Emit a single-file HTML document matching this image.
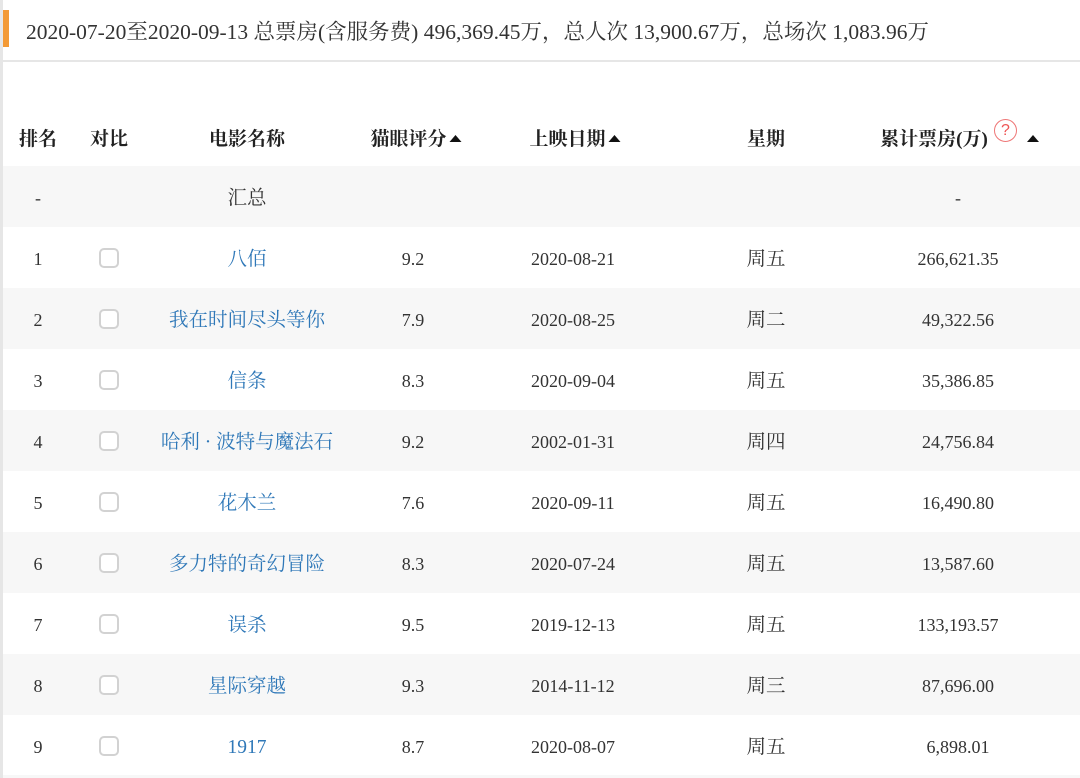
<!DOCTYPE html>
<html style="overflow:hidden;height:778px"><head><meta charset="utf-8"><style>
html,body{overflow:hidden}
body{margin:0;width:1080px;height:778px;background:#fff;position:relative;font-family:"Liberation Serif","Noto Serif CJK SC",serif;color:#333}
.lb{position:absolute;left:0;top:0;width:3px;height:778px;background:#e6e6e6}
.ob{position:absolute;left:3px;top:10px;width:6px;height:37px;background:#f39a36}
.title{position:absolute;left:26px;top:15px;font-size:21.5px;color:#333;white-space:nowrap}
.hl{position:absolute;left:3px;right:0;top:60px;height:2px;background:#e6e6e6}
.row{position:absolute;left:3px;right:0;height:61px}
.g{background:#f7f7f7}
.c{position:absolute;top:2px;height:61px;line-height:61px;text-align:center;font-size:18px;white-space:nowrap;transform:translateX(-50%)}
.h{font-weight:bold;font-size:19px;color:#222}
.a{color:#2f78b8;font-size:19.5px}
.w{font-size:19.5px}
.cb{position:absolute;top:21px;left:96px;width:16px;height:16px;border:2px solid #d2d2d2;border-radius:5px;background:#fff}
.tri{display:inline-block;width:0;height:0;border-left:6px solid transparent;border-right:6px solid transparent;border-bottom:7px solid #111;vertical-align:3px;margin-left:3px}
.q{position:absolute;left:994px;top:119px;width:21px;height:21px;border:1.5px solid #e77;border-radius:50%;color:#e55;font-size:16px;line-height:21px;text-align:center;font-family:"Liberation Sans",sans-serif}
</style></head><body>
<div class="lb"></div><div class="ob"></div>
<div class="title">2020-07-20至2020-09-13 总票房(含服务费) 496,369.45万，总人次 13,900.67万，总场次 1,083.96万</div>
<div class="hl"></div>
<div class="row" style="top:107px">
<div class="c h" style="left:35px">排名</div><div class="c h" style="left:106px">对比</div><div class="c h" style="left:244px">电影名称</div>
<div class="c h" style="left:413px">猫眼评分<span class="tri"></span></div><div class="c h" style="left:572px">上映日期<span class="tri"></span></div>
<div class="c h" style="left:763px">星期</div><div class="c h" style="left:931px">累计票房(万)</div>
<div style="position:absolute;left:1021px;top:28px" class="tri"></div>
</div>
<div class="q">?</div>
<div class="row g" style="top:166px"><div class="c" style="left:35px">-</div><div class="c w" style="left:244px">汇总</div><div class="c" style="left:955px">-</div></div>
<div class="row" style="top:227px"><div class="c" style="left:35px">1</div><div class="cb"></div><div class="c a" style="left:244px">八佰</div><div class="c" style="left:410px">9.2</div><div class="c" style="left:570px">2020-08-21</div><div class="c w" style="left:763px">周五</div><div class="c" style="left:955px">266,621.35</div></div>
<div class="row g" style="top:288px"><div class="c" style="left:35px">2</div><div class="cb"></div><div class="c a" style="left:244px">我在时间尽头等你</div><div class="c" style="left:410px">7.9</div><div class="c" style="left:570px">2020-08-25</div><div class="c w" style="left:763px">周二</div><div class="c" style="left:955px">49,322.56</div></div>
<div class="row" style="top:349px"><div class="c" style="left:35px">3</div><div class="cb"></div><div class="c a" style="left:244px">信条</div><div class="c" style="left:410px">8.3</div><div class="c" style="left:570px">2020-09-04</div><div class="c w" style="left:763px">周五</div><div class="c" style="left:955px">35,386.85</div></div>
<div class="row g" style="top:410px"><div class="c" style="left:35px">4</div><div class="cb"></div><div class="c a" style="left:244px">哈利 · 波特与魔法石</div><div class="c" style="left:410px">9.2</div><div class="c" style="left:570px">2002-01-31</div><div class="c w" style="left:763px">周四</div><div class="c" style="left:955px">24,756.84</div></div>
<div class="row" style="top:471px"><div class="c" style="left:35px">5</div><div class="cb"></div><div class="c a" style="left:244px">花木兰</div><div class="c" style="left:410px">7.6</div><div class="c" style="left:570px">2020-09-11</div><div class="c w" style="left:763px">周五</div><div class="c" style="left:955px">16,490.80</div></div>
<div class="row g" style="top:532px"><div class="c" style="left:35px">6</div><div class="cb"></div><div class="c a" style="left:244px">多力特的奇幻冒险</div><div class="c" style="left:410px">8.3</div><div class="c" style="left:570px">2020-07-24</div><div class="c w" style="left:763px">周五</div><div class="c" style="left:955px">13,587.60</div></div>
<div class="row" style="top:593px"><div class="c" style="left:35px">7</div><div class="cb"></div><div class="c a" style="left:244px">误杀</div><div class="c" style="left:410px">9.5</div><div class="c" style="left:570px">2019-12-13</div><div class="c w" style="left:763px">周五</div><div class="c" style="left:955px">133,193.57</div></div>
<div class="row g" style="top:654px"><div class="c" style="left:35px">8</div><div class="cb"></div><div class="c a" style="left:244px">星际穿越</div><div class="c" style="left:410px">9.3</div><div class="c" style="left:570px">2014-11-12</div><div class="c w" style="left:763px">周三</div><div class="c" style="left:955px">87,696.00</div></div>
<div class="row" style="top:715px"><div class="c" style="left:35px">9</div><div class="cb"></div><div class="c a" style="left:244px">1917</div><div class="c" style="left:410px">8.7</div><div class="c" style="left:570px">2020-08-07</div><div class="c w" style="left:763px">周五</div><div class="c" style="left:955px">6,898.01</div></div>
<div class="row g" style="top:775px;height:3px"></div>
</body></html>
